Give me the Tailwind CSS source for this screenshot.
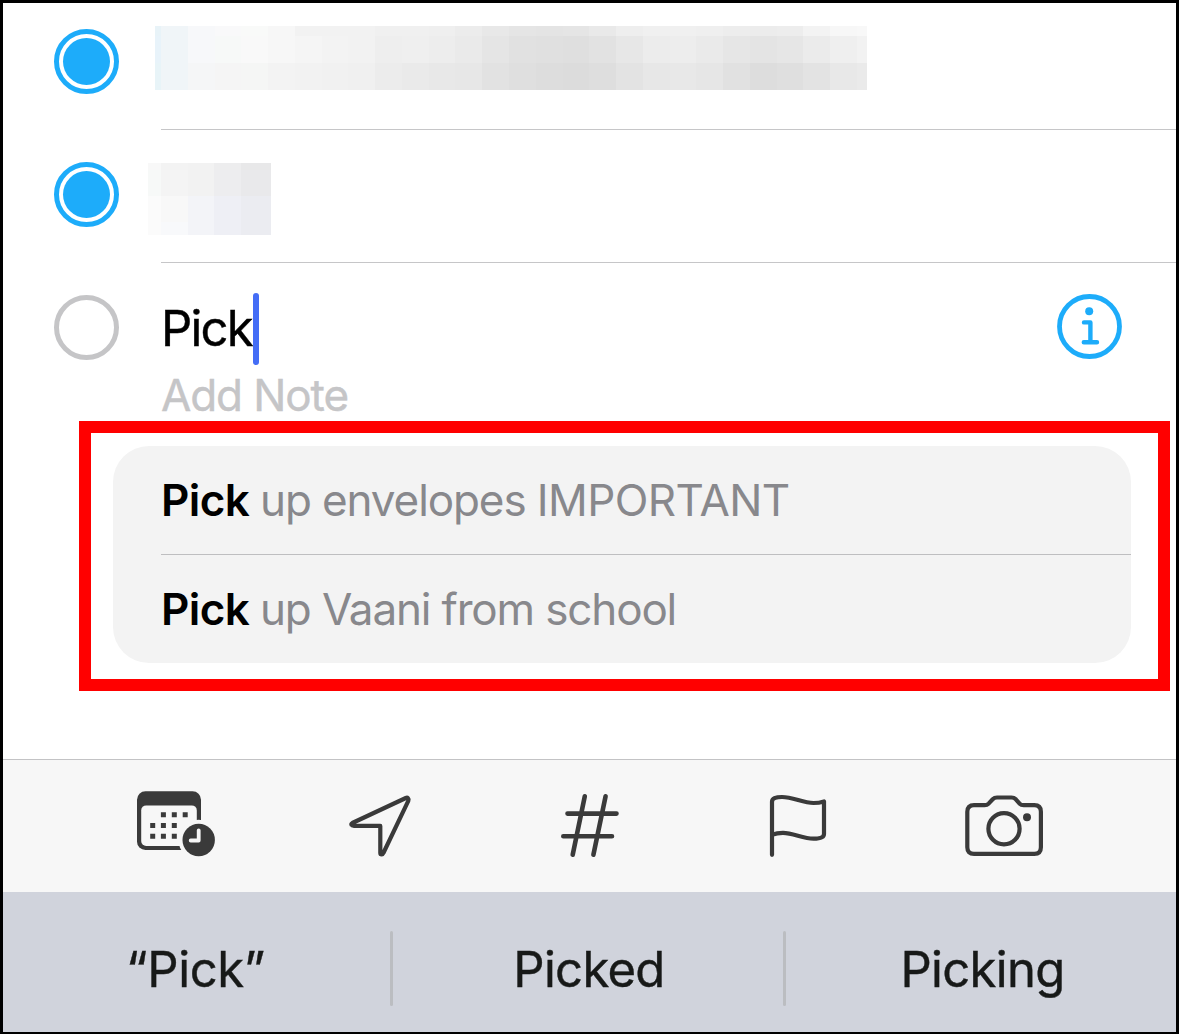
<!DOCTYPE html>
<html lang="en">
<head>
    <meta charset="UTF-8">
    <meta name="viewport" content="width=device-width, initial-scale=1.0">
    <title>Reminders</title>
    <script src="https://cdn.jsdelivr.net/npm/@tailwindcss/browser@4"></script>
</head>
<body class="font-['Inter','Liberation_Sans',sans-serif]">
    <div class="flex flex-col w-[1179px] h-[1034px] bg-white border-[3px] border-b-2 border-black overflow-hidden">
        <main class="h-[756px] shrink-0">
            <!-- Completed reminders, titles redacted -->
            <div class="flex h-[126px]">
                <div class="ml-[51px] mt-[26px] size-[65px] rounded-full border-[5px] border-[#1dacfa] p-1">
                    <div class="size-full rounded-full bg-[#1dacfa]"></div>
                </div>
                <div id="redacted-one" class="ml-9 mt-[23px] w-[712px] h-16 grid grid-cols-[6px_repeat(26,1fr)_10px] grid-rows-[10px_27px_27px]"></div>
            </div>
            <div class="ml-[158px] h-px bg-[#c6c6c8]"></div>
            <div class="flex h-[132px]">
                <div class="ml-[51px] mt-8 size-[65px] rounded-full border-[5px] border-[#1dacfa] p-1">
                    <div class="size-full rounded-full bg-[#1dacfa]"></div>
                </div>
                <div id="redacted-two" class="ml-[29px] mt-[33px] w-[123px] h-[72px] grid grid-cols-[13px_27px_26px_27px_30px] grid-rows-[7px_26px_26px_13px]"></div>
            </div>
            <div class="ml-[158px] h-px bg-[#c6c6c8]"></div>

            <!-- Reminder being typed -->
            <div class="flex h-[158px]">
                <div class="ml-[51px] mt-8 size-[65px] shrink-0 rounded-full border-[5px] border-[#c5c5c7]"></div>
                <div class="ml-[42px] mt-[30px] grow">
                    <div class="flex h-[72px] items-center">
                        <span class="w-[92px] whitespace-nowrap text-[49px] leading-[72px] tracking-[-1.8px] text-black [-webkit-text-stroke:0.4px]">Pick</span>
                        <span class="w-1.5 h-[72px] rounded-full bg-[#446df6]"></span>
                    </div>
                    <div class="text-[44px] leading-[61px] tracking-[-1.1px] text-[#c5c5c7] [-webkit-text-stroke:0.4px]">Add Note</div>
                </div>
                <svg class="mt-[31px] mr-[54px] size-[65px] shrink-0" viewBox="0 0 65 65" fill="none" stroke="#1dacfa" stroke-width="4.4" stroke-linecap="round" stroke-linejoin="round">
                    <circle cx="32.5" cy="32.5" r="30" stroke-width="4.8"/>
                    <circle cx="32.2" cy="17.3" r="4" fill="#1dacfa" stroke="none"/>
                    <path d="M27 28.4H33.4V48.3M26.8 48.3H40"/>
                </svg>
            </div>

            <!-- Suggestions -->
            <div class="ml-[76px] w-[1091px] h-[270px] border-[12px] border-[#ff0000] pt-[13px] pl-[22px] pr-[27px]">
                <div class="h-[217px] rounded-[36px] bg-[#f3f3f3] pl-12 text-[44px] leading-[109px] text-[#88888c] whitespace-nowrap">
                    <div class="h-[108px]"><span class="inline-block w-[99px] font-semibold text-black tracking-[-0.6px]">Pick</span><span class="tracking-[-1.1px]">up envelopes </span><span class="tracking-[-0.6px]">IMPORTANT</span></div>
                    <div class="h-px bg-[#bebec0]"></div>
                    <div class="h-[108px]"><span class="inline-block w-[99px] font-semibold text-black tracking-[-0.6px]">Pick</span><span class="tracking-[-1.15px]">up Vaani from school</span></div>
                </div>
            </div>
        </main>

        <!-- Quick toolbar -->
        <div class="flex h-[133px] shrink-0 justify-between border-t border-[#c3c3c5] bg-[#f7f7f7] pt-[30px] pl-[133px] pr-[132px]">
            <svg class="w-20 h-[70px]" viewBox="0 0 80 70" fill="#3a3a3a">
                <rect x="1" y="1.3" width="64" height="58.7" rx="8.5"/>
                <rect x="5.2" y="15.4" width="55.6" height="40.6" rx="5" fill="#f7f7f7"/>
                <path d="M24.9 22.3h5v5h-5zM35.8 22.3h5v5h-5zM46.7 22.3h5v5h-5zM14.2 33h5v5h-5zM24.9 33h5v5h-5zM35.8 33h5v5h-5zM14.2 43.8h5v5h-5zM24.9 43.8h5v5h-5zM35.8 43.8h5v5h-5z"/>
                <circle cx="62.7" cy="50" r="20.2" fill="#f7f7f7"/>
                <circle cx="62.7" cy="50" r="16.2"/>
                <path d="M62.7 40.3V50.5H54.7" fill="none" stroke="#f7f7f7" stroke-width="3.8" stroke-linecap="round" stroke-linejoin="round"/>
            </svg>
            <svg class="w-20 h-[70px]" viewBox="0 0 80 70" fill="none" stroke="#3a3a3a" stroke-width="4.2" stroke-linejoin="round">
                <path d="M62.8 8L9.3 33Q7.8 33.8 8.6 35Q9 35.9 11 35.9H37.3V63Q37.3 64.5 38.7 64.5Q39.7 64.6 40.4 63L65.3 10.9Q66 9.2 65 8.2Q64.2 7.4 62.8 8Z"/>
            </svg>
            <svg class="w-20 h-[70px]" viewBox="0 0 80 70" fill="none" stroke="#3a3a3a" stroke-width="4.6" stroke-linecap="round">
                <path d="M17.5 23.6H66.5M13.3 46.3H62M34.8 6.3L22.7 64.7M55.6 6.3L43.4 64.7"/>
            </svg>
            <svg class="w-20 h-[70px]" viewBox="0 0 80 70" fill="none" stroke="#3a3a3a" stroke-width="4.2" stroke-linecap="round" stroke-linejoin="round">
                <path d="M15 64.8V11.7Q15 7 25 7C36 7 46 13 56.5 13Q62 13 67 11.4V44Q67 48.7 56.5 48.7C46 48.7 36 42.9 26 42.9Q20 42.9 15 44.7"/>
            </svg>
            <svg class="w-20 h-[70px]" viewBox="0 0 80 70" fill="none" stroke="#3a3a3a" stroke-width="4.2" stroke-linejoin="round">
                <path d="M10 15.2H20.5Q23 15.2 24.8 13.4L28.7 9.3Q30.5 7.5 33 7.5H47.5Q50 7.5 51.8 9.3L55.4 13.4Q57.2 15.2 59.7 15.2H70.3Q76.9 15.2 76.9 21.8V57.2Q76.9 63.8 70.3 63.8H10Q3.3 63.8 3.3 57.2V21.8Q3.3 15.2 10 15.2Z"/>
                <circle cx="40" cy="38.8" r="15.6"/>
                <circle cx="63" cy="27.2" r="4" fill="#3a3a3a" stroke="none"/>
            </svg>
        </div>

        <!-- Keyboard predictions -->
        <div class="flex h-[140px] shrink-0 bg-[#d0d3dc] pt-[39px] text-center text-[49px] leading-[78px] text-[#171918] whitespace-nowrap [-webkit-text-stroke:0.4px]">
            <div class="w-[387px] h-[76px] pr-0.5 tracking-[-0.4px]">“Pick”</div>
            <div class="w-[3px] h-[75px] rounded-full bg-[#bbbdc1]"></div>
            <div class="w-[390px] h-[76px] pl-0.5 tracking-[-0.7px]">Picked</div>
            <div class="w-[3px] h-[75px] rounded-full bg-[#bbbdc1]"></div>
            <div class="w-[390px] h-[76px] pl-[3px] tracking-[-0.7px]">Picking</div>
        </div>
    </div>

    <script>
        const mosaics = {
            'redacted-one': [
                'e8f3f8 f0f5f8 f7f8fa f9f9fa f9faf9 f7f7f7 f2f2f2 f2f2f2 f2f2f2 f0f0f0 f0f0f0 efefef ececec e8e8e8 e5e5e5 e4e4e4 e5e5e5 e9e9e9 eeeeee f0f0f0 f0f0f0 efefef ededed ececec ededed f3f3f3 f7f7f7 f8f8f8',
                'e8f3fa f0f5f8 f7f8fa f7f9f8 f9f9f9 f7f7f7 f5f5f5 f3f3f3 f2f2f2 eeeeee efefef ededed eaeaea e5e5e5 e1e1e1 e0e0e0 dfdfdf e2e2e2 e7e7e7 ececec ededed eaeaea e6e6e6 e4e4e4 e6e6e6 ebebeb efefef f2f2f2',
                'e8f4f8 f0f5f8 f5f6f7 f5f5f5 f5f6f5 f3f3f3 f2f2f2 f1f1f1 f0f0f0 ececec eaeaea e8e8e8 e7e7e7 e2e2e2 dfdfdf dddddd dcdcdc dedede e3e3e3 e7e7e7 e8e8e8 e6e6e6 e1e1e1 dddddd dfdfdf e3e3e3 e8e8e8 eaeaea'
            ],
            'redacted-two': [
                'f8f8f8 f3f3f3 f2f2f2 ededee e8e8e9',
                'f7f9f8 f4f4f4 f2f2f2 ededef e9e9eb',
                'fbfbfb f8f8f8 f3f4f8 eeeff5 ebecf1',
                'fbfbfb f8f9fb f3f4f8 eeeff5 ebecf1'
            ]
        };

        for (const [id, rows] of Object.entries(mosaics)) {
            const grid = document.getElementById(id);
            rows.join(' ').split(' ').forEach(color => {
                const cell = document.createElement('div');
                cell.style.backgroundColor = '#' + color;
                grid.appendChild(cell);
            });
        }
    </script>
</body>
</html>
